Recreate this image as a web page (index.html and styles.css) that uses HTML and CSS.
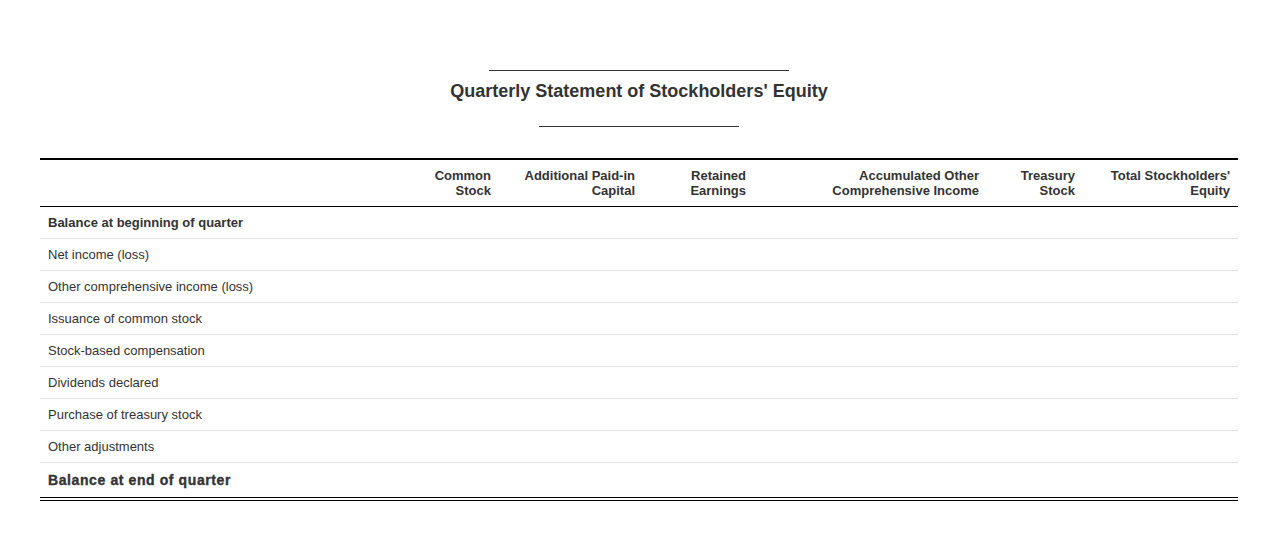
FILE: index.html
```html
<!DOCTYPE html>
<html lang="en">
<head>
<meta charset="utf-8">
<title>Quarterly Statement of Stockholders' Equity</title>
<link rel="stylesheet" href="styles.css">
</head>
<body>
<main class="page">
  <header class="title-block">
    <div class="rule rule-top"></div>
    <h1 class="title">Quarterly Statement of Stockholders' Equity</h1>
    <div class="rule rule-bottom"></div>
  </header>
  <table class="equity">
    <colgroup>
      <col class="c-label">
      <col class="c-common">
      <col class="c-apic">
      <col class="c-re">
      <col class="c-aoci">
      <col class="c-treasury">
      <col class="c-total">
    </colgroup>
    <thead>
      <tr>
        <th class="th-label"></th>
        <th>Common<br>Stock</th>
        <th>Additional Paid-in<br>Capital</th>
        <th>Retained<br>Earnings</th>
        <th>Accumulated Other<br>Comprehensive Income</th>
        <th>Treasury<br>Stock</th>
        <th>Total Stockholders'<br>Equity</th>
      </tr>
    </thead>
    <tbody>
      <tr class="row-open"><td>Balance at beginning of quarter</td><td></td><td></td><td></td><td></td><td></td><td></td></tr>
      <tr><td>Net income (loss)</td><td></td><td></td><td></td><td></td><td></td><td></td></tr>
      <tr><td>Other comprehensive income (loss)</td><td></td><td></td><td></td><td></td><td></td><td></td></tr>
      <tr><td>Issuance of common stock</td><td></td><td></td><td></td><td></td><td></td><td></td></tr>
      <tr><td>Stock-based compensation</td><td></td><td></td><td></td><td></td><td></td><td></td></tr>
      <tr><td>Dividends declared</td><td></td><td></td><td></td><td></td><td></td><td></td></tr>
      <tr><td>Purchase of treasury stock</td><td></td><td></td><td></td><td></td><td></td><td></td></tr>
      <tr><td>Other adjustments</td><td></td><td></td><td></td><td></td><td></td><td></td></tr>
      <tr class="row-close"><td>Balance at end of quarter</td><td></td><td></td><td></td><td></td><td></td><td></td></tr>
    </tbody>
  </table>
</main>
</body>
</html>
```

FILE: styles.css
```css
html, body {
  margin: 0;
  padding: 0;
  background: #fff;
}

body {
  font-family: "Liberation Sans", Arial, sans-serif;
  color: #333;
}

.page {
  padding: 70px 40px 0;
}

.title-block {
  display: flex;
  flex-direction: column;
  align-items: center;
}

.rule {
  height: 1px;
  background: #333;
}

.rule-top {
  width: 300px;
}

.rule-bottom {
  width: 200px;
}

.title {
  margin: 10px 0 24px;
  font-size: 18px;
  font-weight: bold;
  line-height: 21px;
  color: #333;
}

.equity {
  margin-top: 31px;
  width: 1198px;
  table-layout: fixed;
  border-collapse: separate;
  border-spacing: 0;
}

.c-label { width: 379px; }
.c-common { width: 80px; }
.c-apic { width: 144px; }
.c-re { width: 111px; }
.c-aoci { width: 233px; }
.c-treasury { width: 96px; }
.c-total { width: 155px; }

.equity th {
  font-size: 13px;
  font-weight: bold;
  line-height: 15px;
  text-align: right;
  padding: 8px;
  border-top: 2px solid #000;
  border-bottom: 1px solid #000;
  vertical-align: top;
  color: #333;
}

.equity td {
  font-size: 13px;
  line-height: 15px;
  padding: 8px;
  border-bottom: 1px solid #e3e3e3;
  white-space: nowrap;
}

.row-open td {
  font-weight: bold;
}

.row-close td {
  font-size: 14px;
  font-weight: bold;
  letter-spacing: 0.6px;
  -webkit-text-stroke: 0.35px #333;
  padding: 10px 8px 9px;
  border-bottom: 4px double #000;
}
```
